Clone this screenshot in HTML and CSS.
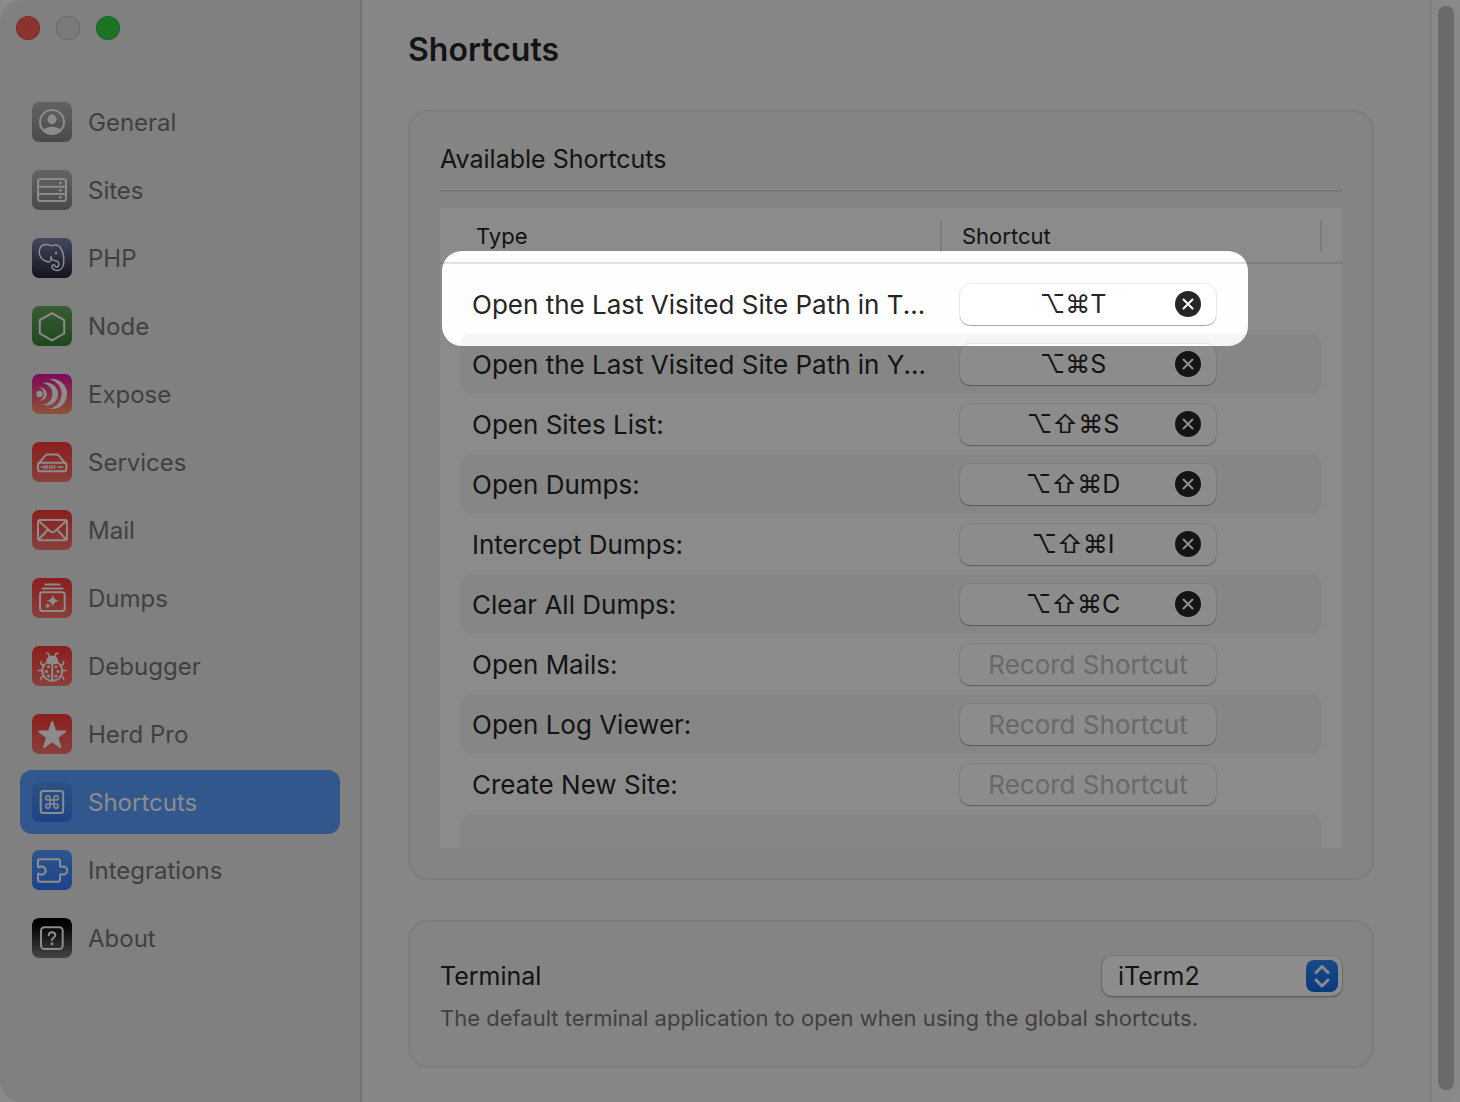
FILE: index.html
```html
<!DOCTYPE html>
<html lang="en">
<head>
  <meta charset="UTF-8">
  <meta name="viewport" content="width=device-width, initial-scale=1.0">
  <title>Shortcuts</title>
  <link rel="stylesheet" href="styles.css">
</head>
<body>
  <div class="window">
    <aside class="sidebar">
      <div class="lights">
        <button class="light red" aria-label="Close"></button>
        <button class="light off" aria-label="Minimize" disabled></button>
        <button class="light green" aria-label="Zoom"></button>
      </div>
      <nav>
        <a href="#general">
          <svg class="icon gray" viewBox="0 0 40 40"><circle cx="20" cy="20" r="12"/><ellipse class="solid" cx="20" cy="17.3" rx="4.4" ry="5"/><path class="solid" d="M11.5 28C14 23.8 26 23.8 28.5 28A12 12 0 0 1 11.5 28z"/></svg>
          General
        </a>
        <a href="#sites">
          <svg class="icon gray" viewBox="0 0 40 40"><rect x="6" y="9" width="28" height="22" rx="2.5"/><path d="M6 16.7h28M6 23.9h28"/><g class="solid"><circle cx="28.4" cy="13" r="1.5"/><circle cx="28.4" cy="20.3" r="1.5"/><circle cx="28.4" cy="27.3" r="1.5"/></g></svg>
          Sites
        </a>
        <a href="#php">
          <svg class="icon navy" viewBox="0 0 40 40"><path class="thin" d="M19 18.5C19 22 18.5 24.5 16 24C14.5 23.6 14 22.8 12.5 22.5C10 22 7 17 7.2 13.5C7.5 9 10.5 6.6 14 6.5C16.5 6.4 18.5 6.8 20 8C22 6.5 26 6.5 28 9C31.5 13.5 32 20 31.6 25C31.3 29.5 28.5 32.5 25 32.5C22 32.5 19.8 30.5 20 28.3C20.2 26.5 22.5 26 23 27.8C23.3 29.6 26.2 29.5 26.8 27.3C27.3 25 26 23 23.5 22.8C20.5 22.6 19 21.5 19 18.5z"/><circle class="solid" cx="24" cy="15" r="1.3"/></svg>
          PHP
        </a>
        <a href="#node">
          <svg class="icon green" viewBox="0 0 40 40"><path d="M20 7.2l12.2 6.9v13.4l-12.2 6.9l-12.2-6.9v-13.4z"/></svg>
          Node
        </a>
        <a href="#expose">
          <svg class="icon pink" viewBox="0 0 40 40"><g class="solid"><circle cx="7.5" cy="20" r="3.2"/><path d="M7 13.5A6.6 6.6 0 1 1 7 26.5A6.8 6.8 0 0 0 7 13.5z"/><path d="M11 9.2A11.4 11.4 0 1 1 11 30.8A10.9 10.9 0 0 0 11 9.2z"/><path d="M17 5.2A15.1 15.1 0 1 1 17 34.8A15 15 0 0 0 17 5.2z"/></g></svg>
          Expose
        </a>
        <a href="#services">
          <svg class="icon coral" viewBox="0 0 40 40"><path d="M6.5 21.5l7-8.2q.6-.7 1.5-.7h10q.9 0 1.5.7l7 8.2"/><rect x="6" y="20.7" width="28.3" height="8.5" rx="2"/><path class="thin" d="M9.5 25h1.8M12.8 23.8v2.4M15 23.8v2.4M17.8 23.8v2.4M20 23.8v2.4M22.5 23.8v2.4M26 25h5"/></svg>
          Services
        </a>
        <a href="#mail">
          <svg class="icon coral" viewBox="0 0 40 40"><rect x="6" y="10" width="29" height="20.3" rx="2"/><path d="M6.8 11l11.7 10.5q2 1.6 4 0L34.2 11M6.8 29.5L16 19.5M34.2 29.5L25 19.5"/></svg>
          Mail
        </a>
        <a href="#dumps">
          <svg class="icon coral" viewBox="0 0 40 40"><path d="M13.5 6.5h14M10.5 10.4h20"/><rect x="8" y="14.3" width="24.7" height="18.7" rx="2.5"/><g class="solid"><path d="M20.8 17q.9 4.8 6 5.8q-5.1 1-6 5.8q-.9-4.8-6-5.8q5.1-1 6-5.8z"/><path d="M15.7 25q.5 2.3 3 2.8q-2.5.5-3 2.8q-.5-2.3-3-2.8q2.5-.5 3-2.8z"/></g></svg>
          Dumps
        </a>
        <a href="#debugger">
          <svg class="icon coral" viewBox="0 0 40 40"><path d="M13.5 17.5C9.5 21 9.5 27 12 30.5C16 36.2 24.5 36.2 28.5 30.5C31 27 31 21 27 17.5M20.2 19v16"/><path class="solid" d="M14 17.5Q14 9.5 20.2 9.5T26.5 17.5Q20.2 19.5 14 17.5z"/><path class="thin" d="M17.5 10.5L16.5 7.5L14.5 7.2M23 10.5L24 7.5L26 7.2M11.5 19.5L9 18V15.5M29 19.5L31.5 18V15.5M10.5 24.5H6.5M30 24.5H34M11.5 29.5L9 31.5V33.5M29 29.5L31.5 31.5V33.5"/><g class="solid"><circle cx="16.5" cy="20.7" r="1.5"/><circle cx="14.5" cy="25.5" r="1.6"/><circle cx="16.5" cy="30" r="1.5"/><circle cx="24" cy="20.7" r="1.5"/><circle cx="26" cy="25.5" r="1.6"/><circle cx="24" cy="30" r="1.5"/></g></svg>
          Debugger
        </a>
        <a href="#pro">
          <svg class="icon coral" viewBox="0 0 40 40"><path class="solid round" d="M20.2 8l3.2 9.5h9.8l-7.9 5.9l3 9.6l-8.1-5.8l-8.1 5.8l3-9.6L7.2 17.5H17z"/></svg>
          Herd Pro
        </a>
        <a href="#shortcuts" class="active" aria-current="page">
          <svg class="icon blue" viewBox="0 0 40 40"><rect x="8.7" y="9" width="22.5" height="22" rx="2.5"/><path class="thin" d="M18 18v-2.1a2.1 2.1 0 1 0-2.1 2.1h8.2a2.1 2.1 0 1 0-2.1-2.1v8.2a2.1 2.1 0 1 0 2.1-2.1h-8.2a2.1 2.1 0 1 0 2.1 2.1z"/></svg>
          Shortcuts
        </a>
        <a href="#integrations">
          <svg class="icon blue" viewBox="0 0 40 40"><path d="M6 16.5V11q0-1.800 1.800-1.800h18.400q1.800 0 1.800 1.800v4.500q0 1.800 1.700 1.300a4 4 0 1 1 0 7.400q-1.700-.5-1.700 1.300V30q0 1.800-1.800 1.800H7.800Q6 31.800 6 30v-5.500q0-1.200 1.500-.6a4 4 0 1 0 0-6.800q-1.500.6-1.500-.6z"/></svg>
          Integrations
        </a>
        <a href="#about">
          <svg class="icon black" viewBox="0 0 40 40"><rect x="9" y="9.3" width="21.7" height="21.7" rx="3.5"/><path d="M16.7 17.3c.2-4.300 6.600-4.100 6.600-.2c0 2.700-3.400 2.600-3.400 5.200"/><circle class="solid" cx="19.9" cy="25.8" r="1.5"/></svg>
          About
        </a>
      </nav>
    </aside>

    <main>
      <h1>Shortcuts</h1>

      <section class="card">
        <h2>Available Shortcuts</h2>
        <div class="table-box">
          <table>
            <thead>
              <tr>
                <th class="type"><div>Type</div></th>
                <th class="keys"><div>Shortcut</div></th>
              </tr>
            </thead>
            <tbody>
              <tr>
                <td><label for="s1">Open the Last Visited Site Path in T...</label></td>
                <td><div class="recorder filled"><input id="s1" value="⌥⌘T"><button aria-label="Clear"><svg viewBox="0 0 26 26"><circle cx="13" cy="13" r="13"/><path d="M8.5 8.5l9 9M17.5 8.5l-9 9"/></svg></button></div></td>
              </tr>
              <tr>
                <td><label for="s2">Open the Last Visited Site Path in Y...</label></td>
                <td><div class="recorder filled"><input id="s2" value="⌥⌘S"><button aria-label="Clear"><svg viewBox="0 0 26 26"><circle cx="13" cy="13" r="13"/><path d="M8.5 8.5l9 9M17.5 8.5l-9 9"/></svg></button></div></td>
              </tr>
              <tr>
                <td><label for="s3">Open Sites List:</label></td>
                <td><div class="recorder filled"><input id="s3" value="⌥⇧⌘S"><button aria-label="Clear"><svg viewBox="0 0 26 26"><circle cx="13" cy="13" r="13"/><path d="M8.5 8.5l9 9M17.5 8.5l-9 9"/></svg></button></div></td>
              </tr>
              <tr>
                <td><label for="s4">Open Dumps:</label></td>
                <td><div class="recorder filled"><input id="s4" value="⌥⇧⌘D"><button aria-label="Clear"><svg viewBox="0 0 26 26"><circle cx="13" cy="13" r="13"/><path d="M8.5 8.5l9 9M17.5 8.5l-9 9"/></svg></button></div></td>
              </tr>
              <tr>
                <td><label for="s5">Intercept Dumps:</label></td>
                <td><div class="recorder filled"><input id="s5" value="⌥⇧⌘I"><button aria-label="Clear"><svg viewBox="0 0 26 26"><circle cx="13" cy="13" r="13"/><path d="M8.5 8.5l9 9M17.5 8.5l-9 9"/></svg></button></div></td>
              </tr>
              <tr>
                <td><label for="s6">Clear All Dumps:</label></td>
                <td><div class="recorder filled"><input id="s6" value="⌥⇧⌘C"><button aria-label="Clear"><svg viewBox="0 0 26 26"><circle cx="13" cy="13" r="13"/><path d="M8.5 8.5l9 9M17.5 8.5l-9 9"/></svg></button></div></td>
              </tr>
              <tr>
                <td><label for="s7">Open Mails:</label></td>
                <td><div class="recorder"><input id="s7" placeholder="Record Shortcut"></div></td>
              </tr>
              <tr>
                <td><label for="s8">Open Log Viewer:</label></td>
                <td><div class="recorder"><input id="s8" placeholder="Record Shortcut"></div></td>
              </tr>
              <tr>
                <td><label for="s9">Create New Site:</label></td>
                <td><div class="recorder"><input id="s9" placeholder="Record Shortcut"></div></td>
              </tr>
              <tr class="rest"><td></td><td></td></tr>
            </tbody>
          </table>
          <div class="spotlight"></div>
        </div>
      </section>

      <section class="card terminal">
        <div class="field">
          <label for="terminal">Terminal</label>
          <div class="select">
            <select id="terminal"><option>iTerm2</option></select>
            <svg viewBox="0 0 32 32"><path d="M10 12.5l6-6l6 6M10 20l6 6l6-6"/></svg>
          </div>
        </div>
        <p>The default terminal application to open when using the global shortcuts.</p>
      </section>
    </main>

    <div class="scrollbar"><div class="thumb"></div></div>
  </div>
</body>
</html>
```

FILE: styles.css
```css
* {
  box-sizing: border-box;
}

body {
  margin: 0;
  background: #fcfcfc;
  color: #262626;
  font-family: Inter, "Liberation Sans", sans-serif;
  font-size: 25px;
  overflow: hidden;
}

button,
input,
select {
  font: inherit;
  color: inherit;
}

.window {
  display: flex;
  min-height: 100vh;
  background: #f4f4f4;
  border-radius: 22px;
}

/* sidebar */
.sidebar {
  width: 362px;
  flex-shrink: 0;
  background: #e9e9e9;
  border-right: 2px solid #d2d2d2;
  border-radius: 22px 0 0 22px;
}

.lights {
  display: flex;
  gap: 16px;
  padding: 16px 16px 50px;
}

.light {
  width: 24px;
  height: 24px;
  padding: 0;
  border: 1px solid rgba(0, 0, 0, 0.15);
  border-radius: 50%;
}

.red { background: #fe5f57; }
.off { background: #dedede; }
.lights .green { background: #33d643; }

nav {
  display: flex;
  flex-direction: column;
  gap: 4px;
  padding: 0 20px;
}

nav a {
  display: flex;
  align-items: center;
  gap: 16px;
  height: 64px;
  padding: 0 12px;
  border-radius: 12px;
  color: #767676;
  font-size: 24px;
  text-decoration: none;
}

nav a.active {
  background: #5a9eff;
  color: #fff;
}

/* icon tiles */
.icon {
  width: 40px;
  height: 40px;
  border-radius: 7px;
  fill: none;
  stroke: #fff;
  stroke-width: 2;
  stroke-linecap: round;
  stroke-linejoin: round;
}

.icon .solid {
  fill: #fff;
  stroke: none;
}

.icon .round {
  stroke: #fff;
}

.icon .thin {
  stroke-width: 1.5;
}

.gray { background: linear-gradient(#b4b4b4, #868688); }
.navy { background: linear-gradient(#7d86b4, #232435); }
.icon.green { background: linear-gradient(#6aa762, #378436); }
.pink { background: linear-gradient(#e511a8, #ff9a60); }
.coral { background: linear-gradient(#fd3833, #fb746d); }
.blue { background: linear-gradient(#529bff, #337bff); }
.active .blue { background: linear-gradient(#5493f0, #337bf8); }
.black { background: linear-gradient(#000 15%, #7c7c7c); }

/* content */
main {
  flex: 1;
  min-width: 0;
  padding: 30px 56px 34px 46px;
}

h1 {
  margin: 0 0 40px;
  font-size: 32px;
  font-weight: 600;
  line-height: 40px;
}

.card {
  margin-bottom: 40px;
  padding: 30px;
  background: #f0f0f0;
  border: 2px solid #e2e2e2;
  border-radius: 20px;
}

h2 {
  margin: 0 0 16px;
  padding-bottom: 14px;
  border-bottom: 2px solid #dadada;
  font-size: 25px;
  font-weight: 400;
  line-height: 34px;
}

/* shortcuts table */
.table-box {
  position: relative;
  background: #fefefe;
}

table {
  width: 100%;
  table-layout: fixed;
  border-spacing: 0;
}

th {
  padding: 12px 0 10px;
  border-bottom: 2px solid #e3e3e3;
  font-size: 22px;
  font-weight: 400;
  text-align: left;
}

th div {
  padding-left: 20px;
  border-right: 2px solid #e3e3e3;
  line-height: 32px;
}

th.type div {
  padding-left: 36px;
}

th.keys {
  width: 400px;
  padding-right: 20px;
}

tbody::before {
  content: "";
  display: block;
  height: 10px;
}

td {
  height: 60px;
  padding: 0 0 0 18px;
  background-clip: padding-box;
  white-space: nowrap;
}

td:first-child {
  padding-left: 12px;
  border-left: 20px solid transparent;
  border-radius: 30px 0 0 30px / 10px;
  font-size: 26px;
}

td:last-child {
  border-right: 20px solid transparent;
  border-radius: 0 30px 30px 0 / 10px;
}

tbody tr:nth-child(even) td {
  background-color: #f4f5f5;
}

/* next empty row, cut off by the bottom of the list */
.rest td {
  height: 34px;
}

.rest td:first-child {
  border-radius: 30px 0 0 0 / 10px;
}

.rest td:last-child {
  border-radius: 0 30px 0 0 / 10px;
}

.recorder {
  position: relative;
  width: 256px;
}

.recorder input {
  display: block;
  width: 100%;
  height: 41px;
  padding: 0 20px;
  border: 0;
  border-radius: 10px;
  background: #fff;
  box-shadow: 0 0 0 1px rgba(0, 0, 0, 0.06), 0 1px 1px rgba(0, 0, 0, 0.3);
  font-size: 26px;
  text-align: center;
}

.recorder.filled input {
  padding-right: 50px;
  font-size: 25px;
}

.recorder input::placeholder {
  color: #c0c0c0;
  opacity: 1;
}

.recorder button {
  position: absolute;
  top: 7px;
  right: 15px;
  width: 26px;
  height: 26px;
  padding: 0;
  border: 0;
  background: none;
}

.recorder svg {
  display: block;
  fill: #262626;
  stroke: #fff;
  stroke-width: 2;
  stroke-linecap: round;
}

.recorder circle {
  stroke: none;
}

/* dims the whole window except the first row */
.spotlight {
  position: absolute;
  top: 43px;
  left: 2px;
  right: 94px;
  height: 95px;
  border-radius: 20px;
  box-shadow: 0 0 0 3000px rgba(0, 0, 0, 0.45);
  pointer-events: none;
  z-index: 10;
}

/* terminal */
.terminal {
  margin-bottom: 0;
  padding: 34px 30px;
}

.field {
  display: flex;
  align-items: center;
  justify-content: space-between;
}

.select {
  position: relative;
  width: 240px;
}

.select select {
  display: block;
  width: 100%;
  height: 40px;
  padding: 0 16px;
  appearance: none;
  border: 0;
  border-radius: 10px;
  background: #fff;
  box-shadow: 0 0 0 1px rgba(0, 0, 0, 0.08), 0 1px 2px rgba(0, 0, 0, 0.35);
}

.select svg {
  position: absolute;
  top: 4px;
  right: 4px;
  width: 32px;
  height: 32px;
  border-radius: 8px;
  background: linear-gradient(#2b8bf5, #0f68e8);
  fill: none;
  stroke: #fff;
  stroke-width: 3;
  stroke-linecap: round;
  stroke-linejoin: round;
  pointer-events: none;
}

.terminal p {
  margin: 8px 0 0;
  color: #767676;
  font-size: 22px;
  line-height: 28px;
}

/* scrollbar */
.scrollbar {
  display: flex;
  width: 30px;
  padding: 6px 6px 12px;
  border-left: 2px solid #e6e6e6;
  border-radius: 0 22px 22px 0;
  background: #f8f8f8;
}

.thumb {
  flex: 1;
  border-radius: 8px;
  background: #c2c2c2;
}
```
